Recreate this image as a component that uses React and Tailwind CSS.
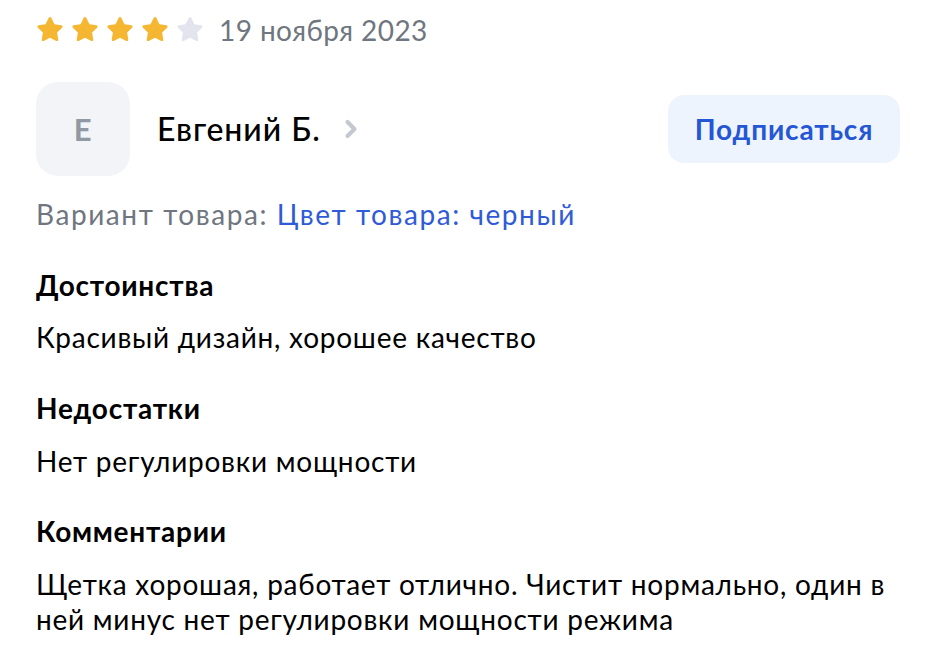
import { ChevronRight } from "lucide-react";

function Star({ filled }) {
  return (
    <svg width="30" height="30" viewBox="0 0 24 24">
      <path
        d="M12 1.6c.5 0 .9.3 1.1.7l2.5 5.1 5.5.8c.9.1 1.3 1.2.6 1.9l-4 3.9.9 5.5c.2.9-.8 1.6-1.6 1.2L12 18.1l-5 2.6c-.8.4-1.8-.3-1.6-1.2l.9-5.5-4-3.9c-.7-.7-.3-1.8.6-1.9l5.5-.8 2.5-5.1c.2-.4.6-.7 1.1-.7z"
        fill={filled ? "#f5b731" : "#e3e4ee"}
      />
    </svg>
  );
}

export default function App() {
  const stars = [true, true, true, true, false];

  return (
    <div
      className="w-[936px] h-[650px] bg-white text-black overflow-hidden px-[36px] pt-[15px] tracking-[0.047em]"
      style={{ fontFamily: "Lato, 'Noto Sans', sans-serif" }}
    >
      <div className="flex items-center h-[30px]">
        <div className="flex items-center gap-[5px] -ml-[1px]">
          {stars.map((f, i) => (
            <Star key={i} filled={f} />
          ))}
        </div>
        <span className="ml-[14px] text-[28px] leading-[36px] text-[#6f7680] tracking-[0.015em]">
          19 ноября 2023
        </span>
      </div>

      <div className="flex items-center justify-between mt-[37px]">
        <div className="flex items-center">
          <div className="w-[94px] h-[94px] rounded-[22px] bg-[#f2f4f8] flex items-center justify-center text-[31px] font-bold text-[#8f98a3]">
            Е
          </div>
          <span className="ml-[27px] text-[32px] leading-[40px] font-medium tracking-[0.03em]">Евгений Б.</span>
          <ChevronRight className="ml-[16px] text-[#c4c8cf]" size={28} strokeWidth={3.5} />
        </div>
        <button className="w-[232px] h-[68px] rounded-[16px] bg-[#eef4fe] text-[28px] font-bold text-[#2556d4] tracking-[0.03em]">
          Подписаться
        </button>
      </div>

      <div className="mt-[20px] text-[28px] leading-[36px] tracking-[0.056em]">
        <span className="text-[#6f7680]">Вариант товара: </span>
        <span className="text-[#2f5bd8]">Цвет товара: черный</span>
      </div>

      <div className="flex flex-col text-[28px] leading-[36px]">
        <div className="mt-[35px] font-bold">Достоинства</div>
        <div className="mt-[16px]">Красивый дизайн, хорошее качество</div>
        <div className="mt-[35px] font-bold">Недостатки</div>
        <div className="mt-[17px]">Нет регулировки мощности</div>
        <div className="mt-[34px] font-bold">Комментарии</div>
        <div className="mt-[18px] leading-[35px] w-[880px]">
          Щетка хорошая, работает отлично. Чистит нормально, один в ней минус нет регулировки мощности режима
        </div>
      </div>
    </div>
  );
}
